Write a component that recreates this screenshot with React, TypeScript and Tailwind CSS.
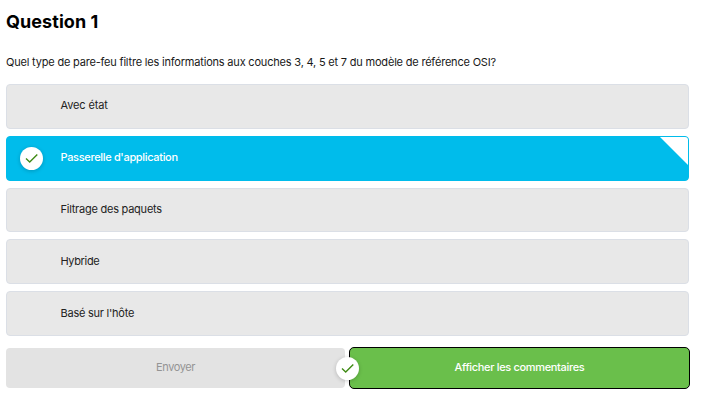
const options = [
  { label: "Avec état", tracking: "tracking-[-0.14px]" },
  { label: "Passerelle d'application", tracking: "tracking-[-0.33px]" },
  { label: "Filtrage des paquets", tracking: "tracking-[-0.24px]" },
  { label: "Hybride", tracking: "tracking-[-0.36px]" },
  { label: "Basé sur l'hôte", tracking: "tracking-[-0.24px]" },
];

const rowStyles = [
  "h-[45px] border-[#dbdfe6] bg-[#e8e8e8] pb-[2px]",
  "relative h-[45px] border-[#00bceb] bg-[#00bceb] font-medium text-white",
  "h-11 border-[#dbdfe6] bg-[#e8e8e8] pb-px",
  "h-[45px] border-[#dbdfe6] bg-[#e8e8e8] pb-px",
  "h-[45px] border-[#dbdfe6] bg-[#e8e8e8] pb-px",
];

function Check() {
  return (
    <span className="flex size-[23px] items-center justify-center rounded-full bg-white shadow-[0_1px_4px_rgba(0,0,0,0.2)]">
      <svg width="13" height="11" viewBox="0 0 13 11" fill="none" stroke="#3f8a14" strokeWidth="1.4">
        <path d="M1 5.6 4.7 9 12.3 1.6" />
      </svg>
    </span>
  );
}

export default function App() {
  return (
    <main className="h-[411px] w-[719px] overflow-hidden bg-white pl-1.5 pt-2.5 font-['Inter',sans-serif] text-[11px] text-[#222]">
      <h1 className="h-[24px] text-[18px] leading-[24px] font-bold tracking-[0.06px] text-black">Question 1</h1>
      <p className="mt-5 h-4 leading-4 tracking-[-0.194px] whitespace-nowrap text-[#181818]">
        Quel type de pare-feu filtre les informations aux couches 3, 4, 5 et 7 du modèle de référence OSI?
      </p>
      <ul className="mt-3.5 flex w-[683px] flex-col gap-[7px]">
        {options.map(({ label, tracking }, i) => (
          <li key={label} className={`flex items-center rounded border ${rowStyles[i]}`}>
            <span className="flex w-[53.5px] pl-[13px]">{i === 1 && <Check />}</span>
            <span className={i === 1 ? `${tracking} pb-[2px]` : tracking}>{label}</span>
            {i === 1 && (
              <svg className="absolute top-0 right-0" width="28" height="28" viewBox="0 0 28 28">
                <path d="M0 0H25Q28 0 28 3V28Z" fill="white" />
              </svg>
            )}
          </li>
        ))}
      </ul>
      <div className="relative mt-[11px] flex w-[684px] items-center gap-1">
        <button className="h-10 w-[339px] rounded bg-[#e3e3e3] pb-0.5 tracking-[-0.4px] text-[#949494]">Envoyer</button>
        <button className="h-[42px] w-[341px] rounded-[5px] border border-black bg-[#6abf4b] pb-0.5 font-medium tracking-[-0.33px] text-white">
          Afficher les commentaires
        </button>
        <span className="absolute top-[10px] left-[330px]">
          <Check />
        </span>
      </div>
    </main>
  );
}
